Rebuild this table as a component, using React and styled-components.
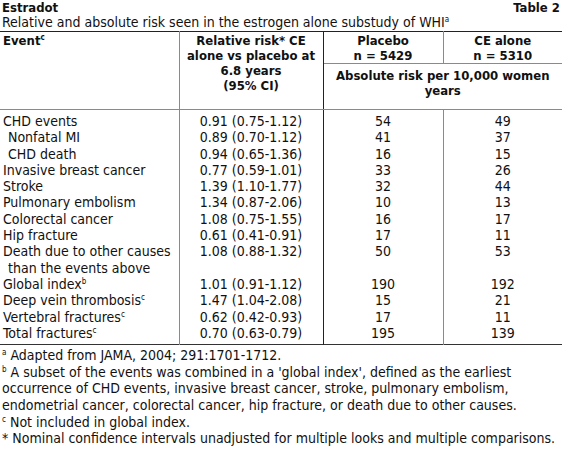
import React from 'react';
import styled, { createGlobalStyle } from 'styled-components';

const GlobalStyle = createGlobalStyle`
  html, body {
    margin: 0;
    padding: 0;
    background: #fff;
  }
  body {
    font-family: "DejaVu Sans Condensed", "Liberation Sans", sans-serif;
    font-size: 14px;
    color: #111;
  }
`;

const rows = [
  { event: 'CHD events', rr: '0.91 (0.75-1.12)', placebo: '54', ce: '49' },
  { event: 'Nonfatal MI', rr: '0.89 (0.70-1.12)', placebo: '41', ce: '37', indent: true },
  { event: 'CHD death', rr: '0.94 (0.65-1.36)', placebo: '16', ce: '15', indent: true },
  { event: 'Invasive breast cancer', rr: '0.77 (0.59-1.01)', placebo: '33', ce: '26' },
  { event: 'Stroke', rr: '1.39 (1.10-1.77)', placebo: '32', ce: '44' },
  { event: 'Pulmonary embolism', rr: '1.34 (0.87-2.06)', placebo: '10', ce: '13' },
  { event: 'Colorectal cancer', rr: '1.08 (0.75-1.55)', placebo: '16', ce: '17' },
  { event: 'Hip fracture', rr: '0.61 (0.41-0.91)', placebo: '17', ce: '11' },
  { event: 'Death due to other causes', rr: '1.08 (0.88-1.32)', placebo: '50', ce: '53' },
  { event: 'than the events above', rr: '', placebo: '', ce: '', indent: true },
  { event: 'Global index', sup: 'b', rr: '1.01 (0.91-1.12)', placebo: '190', ce: '192' },
  { event: 'Deep vein thrombosis', sup: 'c', rr: '1.47 (1.04-2.08)', placebo: '15', ce: '21' },
  { event: 'Vertebral fractures', sup: 'c', rr: '0.62 (0.42-0.93)', placebo: '17', ce: '11' },
  { event: 'Total fractures', sup: 'c', rr: '0.70 (0.63-0.79)', placebo: '195', ce: '139' },
];

const App = () => {
  return (
    <Page>
      <GlobalStyle />
      <TitleBar>
        <Title>Estradot</Title>
        <Title>Table 2</Title>
      </TitleBar>
      <Subtitle>
        Relative and absolute risk seen in the estrogen alone substudy of WHI<Sup>a</Sup>
      </Subtitle>
      <Table>
        <colgroup>
          <col style={{ width: 179 }} />
          <col style={{ width: 144 }} />
          <col style={{ width: 120 }} />
          <col />
        </colgroup>
        <thead>
          <HeadRow h={31}>
            <HeadCell rowSpan={2} align="left" right="grey">
              Event<Sup>c</Sup>
            </HeadCell>
            <HeadCell rowSpan={2} right="dark">
              Relative risk* CE
              <br />
              alone vs placebo at
              <br />
              6.8 years
              <br />
              (95% CI)
            </HeadCell>
            <HeadCell right="grey">
              Placebo
              <br />n = 5429
            </HeadCell>
            <HeadCell>
              CE alone
              <br />n = 5310
            </HeadCell>
          </HeadRow>
          <HeadRow h={46}>
            <HeadCell colSpan={2} pad={4}>
              Absolute risk per 10,000 women
              <br />
              years
            </HeadCell>
          </HeadRow>
        </thead>
        <Body>
          {rows.map((r, i) => (
            <tr key={i}>
              <EventCell indent={r.indent}>
                {r.event}
                {r.sup && <Sup>{r.sup}</Sup>}
              </EventCell>
              <Cell right="dark">{r.rr}</Cell>
              <Cell right="grey">{r.placebo}</Cell>
              <Cell>{r.ce}</Cell>
            </tr>
          ))}
        </Body>
      </Table>
      <Notes>
        <Note>
          <Sup>a</Sup> Adapted from JAMA, 2004; 291:1701-1712.
        </Note>
        <Note>
          <Sup>b</Sup> A subset of the events was combined in a 'global index', defined as the earliest
        </Note>
        <Note>occurrence of CHD events, invasive breast cancer, stroke, pulmonary embolism,</Note>
        <Note>endometrial cancer, colorectal cancer, hip fracture, or death due to other causes.</Note>
        <Note>
          <Sup>c</Sup> Not included in global index.
        </Note>
        <Note>* Nominal confidence intervals unadjusted for multiple looks and multiple comparisons.</Note>
      </Notes>
    </Page>
  );
};

const lineColor = { grey: '#8a8a8a', dark: '#222' };

const Page = styled.div`
  width: 562px;
  height: 457px;
  overflow: hidden;
  box-sizing: border-box;
`;
const TitleBar = styled.div`
  display: flex;
  justify-content: space-between;
  padding: 1px 2px 0 2px;
`;
const Title = styled.span`
  font-weight: bold;
  font-size: 13px;
  line-height: 14px;
`;
const Subtitle = styled.div`
  padding: 0 2px;
  line-height: 15px;
`;
const Sup = styled.sup`
  font-size: 8px;
  line-height: 0;
  vertical-align: 5px;
`;
const Table = styled.table`
  width: 562px;
  border-collapse: collapse;
  table-layout: fixed;
  margin-top: 1px;
  border-top: 1px solid #222;
  border-bottom: 1px solid #333;
`;
const HeadRow = styled.tr`
  height: ${(p) => p.h}px;
`;
const HeadCell = styled.th`
  font-weight: bold;
  font-size: 13px;
  text-align: ${(p) => p.align || 'center'};
  vertical-align: top;
  padding: ${(p) => p.pad || 1}px 3px 0 3px;
  line-height: 15px;
  border-right: ${(p) => (p.right ? `1px solid ${lineColor[p.right]}` : 'none')};
  border-bottom: 1px solid #8a8a8a;
  white-space: nowrap;
`;
const Body = styled.tbody`
  tr:first-child td {
    padding-top: 3px;
  }
  tr:last-child td {
    padding-bottom: 3px;
  }
`;
const Cell = styled.td`
  text-align: center;
  padding: 0 3px;
  line-height: 16.3px;
  white-space: nowrap;
  border-right: ${(p) => (p.right ? `1px solid ${lineColor[p.right]}` : 'none')};
`;
const EventCell = styled(Cell)`
  text-align: left;
  padding-left: ${(p) => (p.indent ? '8px' : '3px')};
  border-right: 1px solid #8a8a8a;
`;
const Notes = styled.div`
  padding: 2px 2px 0 2px;
`;
const Note = styled.div`
  line-height: 16.6px;
`;

export default App;
